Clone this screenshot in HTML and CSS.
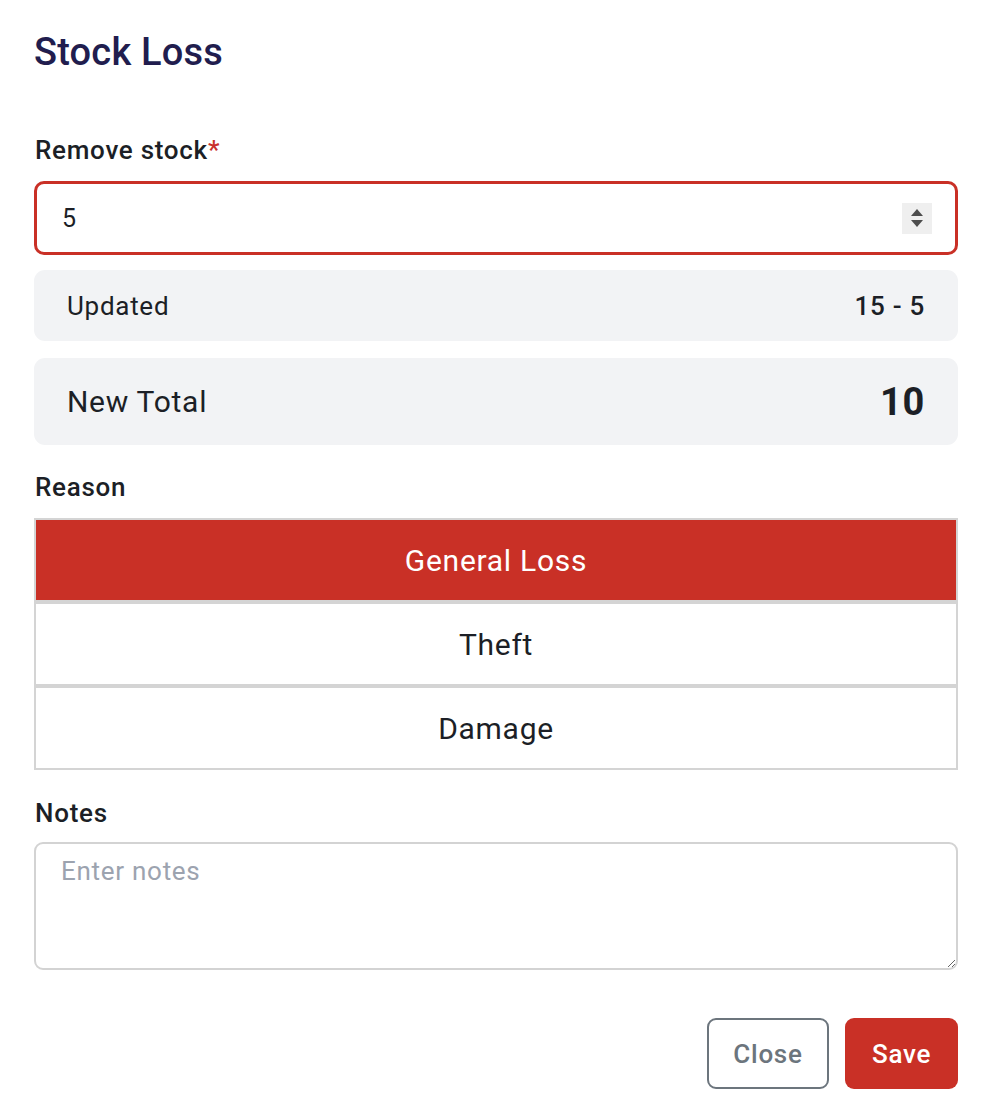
FILE: index.html
```html
<!DOCTYPE html>
<html lang="en">
<head>
<meta charset="utf-8">
<title>Stock Loss</title>
<link rel="stylesheet" href="styles.css">
</head>
<body>
<div class="dialog">
  <h1 class="title">Stock Loss</h1>

  <label class="label label-first" for="qty">Remove stock<span class="req">*</span></label>
  <div class="num-field">
    <input id="qty" class="num-input" type="text" value="5">
    <span class="spinner" aria-hidden="true">
      <svg width="14" height="22" viewBox="0 0 14 22"><path d="M7 2 L13 9 L1 9 Z" fill="#4d4d4d"/><path d="M1 13 L13 13 L7 20 Z" fill="#4d4d4d"/></svg>
    </span>
  </div>

  <div class="summary summary-small">
    <span>Updated</span>
    <span class="summary-val">15 - 5</span>
  </div>
  <div class="summary summary-big">
    <span>New Total</span>
    <span class="summary-total">10</span>
  </div>

  <div class="label label-reason">Reason</div>
  <div class="reasons">
    <button class="reason active">General Loss</button>
    <button class="reason">Theft</button>
    <button class="reason">Damage</button>
  </div>

  <label class="label label-notes" for="notes">Notes</label>
  <textarea id="notes" class="notes" placeholder="Enter notes"></textarea>

  <div class="actions">
    <button class="btn btn-close">Close</button>
    <button class="btn btn-save">Save</button>
  </div>
</div>
</body>
</html>
```

FILE: styles.css
```css
* { box-sizing: border-box; }
html, body { margin: 0; padding: 0; background: #fff; }
body {
  font-family: Roboto, "Liberation Sans", Arial, sans-serif;
  color: #1c1f26;
  letter-spacing: 0.045em;
}
.dialog {
  width: 994px;
  padding: 28px 36px 0 34px;
  display: flex;
  flex-direction: column;
}
.title {
  margin: 0;
  font-size: 38px;
  font-weight: 500;
  color: #211d4e;
  line-height: 48px;
  letter-spacing: 0.005em;
}
.label {
  display: block;
  font-size: 26px;
  font-weight: 500;
  line-height: 32px;
  color: #1c1f26;
  margin: 26px 0 12px 1px;
}
.label-first { margin-top: 58px; margin-bottom: 15px; }
.label-reason { margin-bottom: 15px; }
.label-notes { margin-top: 27px; margin-bottom: 13px; }
.req { color: #c9302c; }
.num-field {
  height: 74px;
  border: 3px solid #c93026;
  border-radius: 10px;
  display: flex;
  align-items: center;
  padding: 0 23px 0 25px;
}
.num-input {
  flex: 1;
  border: 0;
  outline: none;
  font-family: inherit;
  font-size: 25px;
  letter-spacing: inherit;
  color: #1c1f26;
  padding: 0;
  background: transparent;
}
.spinner {
  width: 30px;
  height: 31px;
  background: #efefef;
  display: flex;
  align-items: center;
  justify-content: center;
  margin-left: 8px;
}
.summary {
  background: #f2f3f5;
  border-radius: 11px;
  display: flex;
  justify-content: space-between;
  align-items: center;
  padding: 0 33px 0 33px;
  color: #1c1f26;
}
.summary-small {
  margin-top: 15px;
  height: 71px;
  font-size: 26px;
}
.summary-val { font-weight: 500; }
.summary-big {
  margin-top: 17px;
  height: 87px;
  font-size: 30px;
}
.summary-total { font-size: 38px; font-weight: 700; letter-spacing: 0.02em; }
.reasons {
  display: flex;
  flex-direction: column;
}
.reason {
  height: 84px;
  border: 2px solid #d4d4d4;
  background: #fff;
  font-family: inherit;
  font-size: 30px;
  letter-spacing: inherit;
  color: #1c1f26;
  margin: 0;
  padding: 0;
}
.reason.active { background: #c93026; color: #fff; }
.notes {
  height: 128px;
  border: 2px solid #d3d3d3;
  border-radius: 9px;
  font-family: inherit;
  font-size: 26px;
  letter-spacing: inherit;
  padding: 12px 25px;
  resize: vertical;
  outline: none;
  margin: 0;
  display: block;
}
.notes::placeholder { color: #9ca3af; }
.actions {
  display: flex;
  justify-content: flex-end;
  gap: 16px;
  margin-top: 48px;
}
.btn {
  height: 71px;
  border-radius: 9px;
  font-family: inherit;
  font-size: 26px;
  font-weight: 500;
  letter-spacing: inherit;
  padding: 0;
  cursor: pointer;
}
.btn-close {
  background: #fff;
  border: 2px solid #6c757d;
  color: #6c757d;
  width: 122px;
}
.btn-save {
  background: #c93026;
  border: 0;
  color: #fff;
  width: 113px;
}
```
